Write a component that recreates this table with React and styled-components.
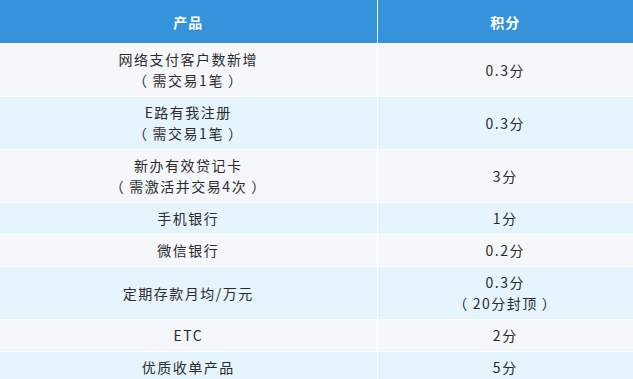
import React from "react";
import styled, { createGlobalStyle } from "styled-components";

const GlobalStyle = createGlobalStyle`
  html, body {
    margin: 0;
    padding: 0;
    background: #ffffff;
  }
`;

const Table = styled.table`
  width: 633px;
  border-collapse: collapse;
  table-layout: fixed;
  font-family: "Noto Sans CJK SC", "Microsoft YaHei", sans-serif;
  font-size: 14px;
  color: #2b2b2b;
`;

const HeadCell = styled.th`
  height: 43px;
  padding: 0;
  background: #3593dc;
  color: #ffffff;
  font-weight: bold;
  font-size: 14px;
  letter-spacing: 1px;
  text-align: center;
  border-right: 1px solid #ffffff;
  border-bottom: 1px solid #ffffff;

  &:last-child {
    border-right: none;
  }
`;

const Row = styled.tr`
  background: ${({ $alt }) => ($alt ? "#e6f5fd" : "#f5f7fb")};
`;

const Cell = styled.td`
  padding: 5px 0 5px;
  height: ${({ $tall }) => ($tall ? "42px" : "21px")};
  line-height: 21px;
  text-align: center;
  letter-spacing: 1.5px;
  border-right: 1px solid #ffffff;
  border-bottom: 1px solid #ffffff;

  &:last-child {
    border-right: none;
  }
`;

const Line = styled.div`
  white-space: nowrap;
`;

const Paren = styled.span`
  display: inline-block;
  margin: ${({ $open }) => ($open ? "0 4px 0 0" : "0 0 0 4px")};
`;

const Text = ({ t }) => {
  const m = t.match(/^（(.*)）$/);
  if (!m) return <Line>{t}</Line>;
  return (
    <Line>
      <Paren $open>（</Paren>
      {m[1]}
      <Paren>）</Paren>
    </Line>
  );
};

const rows = [
  { product: ["网络支付客户数新增", "（需交易1笔）"], score: ["0.3分"] },
  { product: ["E路有我注册", "（需交易1笔）"], score: ["0.3分"] },
  { product: ["新办有效贷记卡", "（需激活并交易4次）"], score: ["3分"] },
  { product: ["手机银行"], score: ["1分"] },
  { product: ["微信银行"], score: ["0.2分"] },
  { product: ["定期存款月均/万元"], score: ["0.3分", "（20分封顶）"] },
  { product: ["ETC"], score: ["2分"] },
  { product: ["优质收单产品"], score: ["5分"] },
];

export default function App() {
  return (
    <>
      <GlobalStyle />
      <Table>
        <colgroup>
          <col style={{ width: 377 }} />
          <col />
        </colgroup>
        <thead>
          <tr>
            <HeadCell>产品</HeadCell>
            <HeadCell>积分</HeadCell>
          </tr>
        </thead>
        <tbody>
          {rows.map((r, i) => {
            const tall = r.product.length > 1 || r.score.length > 1;
            return (
              <Row key={i} $alt={i % 2 === 1}>
                <Cell $tall={tall}>
                  {r.product.map((t) => (
                    <Text key={t} t={t} />
                  ))}
                </Cell>
                <Cell $tall={tall}>
                  {r.score.map((t) => (
                    <Text key={t} t={t} />
                  ))}
                </Cell>
              </Row>
            );
          })}
        </tbody>
      </Table>
    </>
  );
}
